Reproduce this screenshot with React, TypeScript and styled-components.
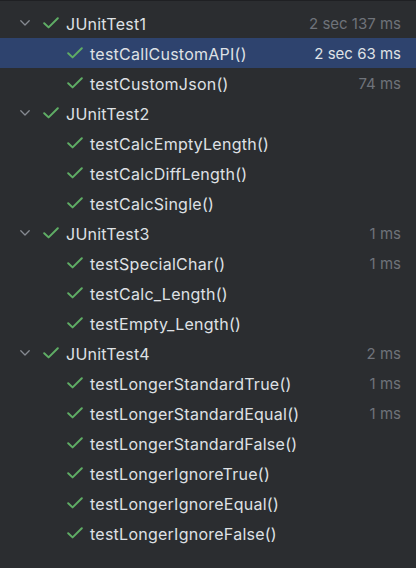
import React from "react";
import styled, { createGlobalStyle } from "styled-components";

const Global = createGlobalStyle`
  html, body { margin: 0; padding: 0; background: #2b2d30; }
  body { font-family: Inter, "Noto Sans", sans-serif; -webkit-font-smoothing: antialiased; }
`;

type Test = { name: string; time?: string; selected?: boolean };
type Suite = { name: string; time?: string; tests: Test[] };

const suites: Suite[] = [
  {
    name: "JUnitTest1",
    time: "2 sec 137 ms",
    tests: [
      { name: "testCallCustomAPI()", time: "2 sec 63 ms", selected: true },
      { name: "testCustomJson()", time: "74 ms" },
    ],
  },
  {
    name: "JUnitTest2",
    tests: [
      { name: "testCalcEmptyLength()" },
      { name: "testCalcDiffLength()" },
      { name: "testCalcSingle()" },
    ],
  },
  {
    name: "JUnitTest3",
    time: "1 ms",
    tests: [
      { name: "testSpecialChar()", time: "1 ms" },
      { name: "testCalc_Length()" },
      { name: "testEmpty_Length()" },
    ],
  },
  {
    name: "JUnitTest4",
    time: "2 ms",
    tests: [
      { name: "testLongerStandardTrue()", time: "1 ms" },
      { name: "testLongerStandardEqual()", time: "1 ms" },
      { name: "testLongerStandardFalse()" },
      { name: "testLongerIgnoreTrue()" },
      { name: "testLongerIgnoreEqual()" },
      { name: "testLongerIgnoreFalse()" },
    ],
  },
];

const Panel = styled.div`
  width: 416px;
  height: 568px;
  box-sizing: border-box;
  background: #2b2d30;
  border-top: 1px solid #1f2023;
  padding-top: 7px;
  overflow: hidden;
`;

const Tree = styled.ul`
  list-style: none;
  margin: 0;
  padding: 0;
  display: flex;
  flex-direction: column;
`;

const Row = styled.li<{ $indent: number; $selected?: boolean }>`
  height: 30px;
  display: flex;
  align-items: center;
  padding-left: ${(p) => p.$indent}px;
  padding-right: 15px;
  background: ${(p) => (p.$selected ? "#2e436e" : "transparent")};
`;

const Chevron = styled.span`
  width: 23px;
  height: 30px;
  display: flex;
  align-items: center;
  flex-shrink: 0;
`;

const Check = styled.span`
  width: 16px;
  height: 30px;
  display: flex;
  align-items: center;
  margin-right: 7px;
  flex-shrink: 0;
`;

const Label = styled.span`
  flex: 1;
  color: #dfe1e5;
  font-size: 16px;
  line-height: 30px;
  padding-top: 1px;
  white-space: nowrap;
  letter-spacing: 0.25px;
`;

const Time = styled.span<{ $selected?: boolean }>`
  color: ${(p) => (p.$selected ? "#dfe1e5" : "#6f737a")};
  font-size: 15px;
  line-height: 30px;
  padding-top: 1px;
  white-space: nowrap;
`;

const ChevronIcon = () => (
  <svg width="10" height="6" viewBox="0 0 10 6" fill="none">
    <path d="M0.8 0.8 L5 5 L9.2 0.8" stroke="#868a91" strokeWidth="1.3" strokeLinecap="round" strokeLinejoin="round" />
  </svg>
);

const CheckIcon = () => (
  <svg width="16" height="12" viewBox="0 0 16 12" fill="none">
    <path d="M1.2 6.2 L5.6 10.4 L14.8 1.2" stroke="#5fad65" strokeWidth="2" strokeLinecap="round" strokeLinejoin="round" />
  </svg>
);

export default function App() {
  return (
    <>
      <Global />
      <Panel>
        <Tree>
          {suites.map((s) => (
            <React.Fragment key={s.name}>
              <Row $indent={20}>
                <Chevron>
                  <ChevronIcon />
                </Chevron>
                <Check>
                  <CheckIcon />
                </Check>
                <Label>{s.name}</Label>
                {s.time && <Time>{s.time}</Time>}
              </Row>
              {s.tests.map((t) => (
                <Row key={t.name} $indent={67} $selected={t.selected}>
                  <Check>
                    <CheckIcon />
                  </Check>
                  <Label>{t.name}</Label>
                  {t.time && <Time $selected={t.selected}>{t.time}</Time>}
                </Row>
              ))}
            </React.Fragment>
          ))}
        </Tree>
      </Panel>
    </>
  );
}
